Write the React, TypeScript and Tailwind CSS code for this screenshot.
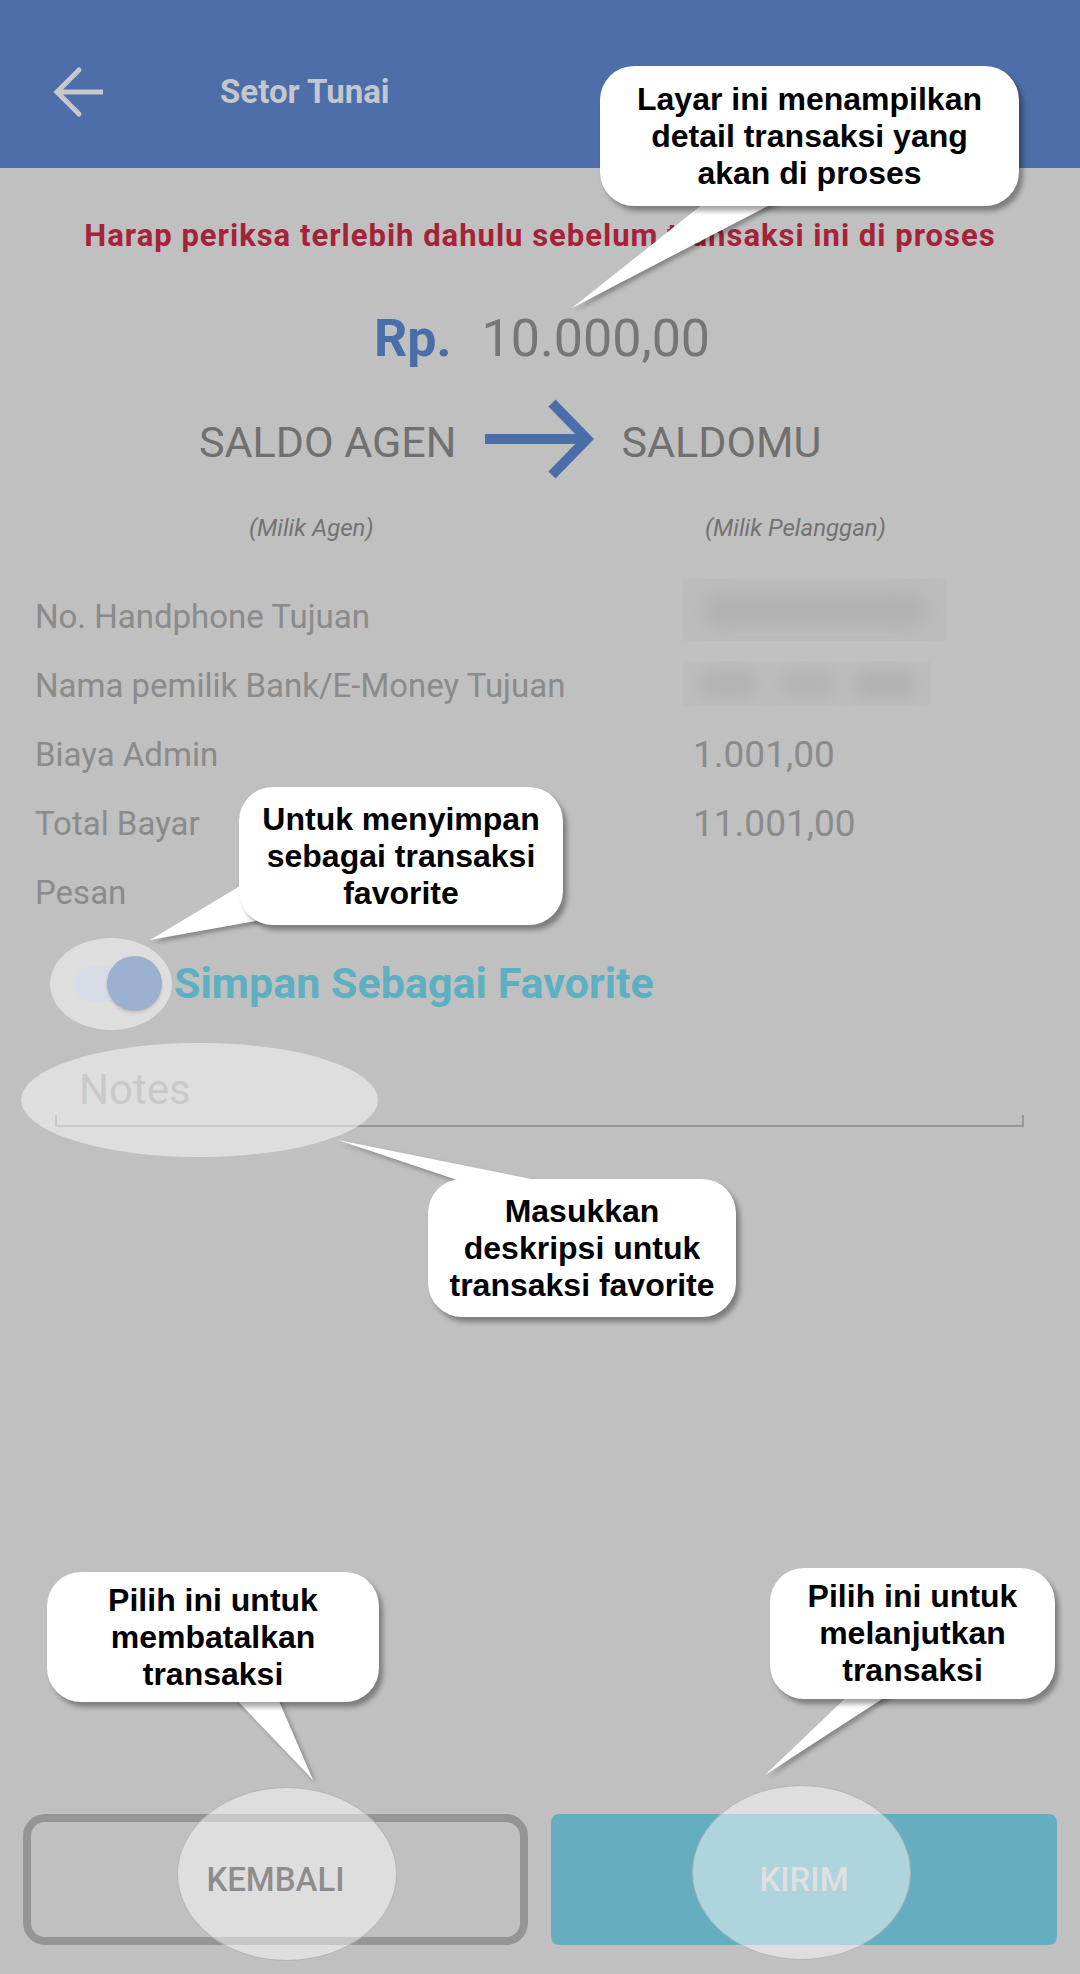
import React from 'react';

type Row = { label: string; value?: string; blur?: 'phone' | 'name' };

const rows: Row[] = [
  { label: 'No. Handphone Tujuan', blur: 'phone' },
  { label: 'Nama pemilik Bank/E-Money Tujuan', blur: 'name' },
  { label: 'Biaya Admin', value: '1.001,00' },
  { label: 'Total Bayar', value: '11.001,00' },
  { label: 'Pesan' },
];

type Tip = { left: number; top: number; w: number; h: number; lines: string[] };

const tips: Tip[] = [
  { left: 600, top: 66, w: 419, h: 140, lines: ['Layar ini menampilkan', 'detail transaksi yang', 'akan di proses'] },
  { left: 239, top: 787, w: 324, h: 138, lines: ['Untuk menyimpan', 'sebagai transaksi', 'favorite'] },
  { left: 428, top: 1179, w: 308, h: 138, lines: ['Masukkan', 'deskripsi untuk', 'transaksi favorite'] },
  { left: 47, top: 1572, w: 332, h: 130, lines: ['Pilih ini untuk', 'membatalkan', 'transaksi'] },
  { left: 770, top: 1568, w: 285, h: 131, lines: ['Pilih ini untuk', 'melanjutkan', 'transaksi'] },
];

function Blurred({ kind }: { kind: 'phone' | 'name' }) {
  if (kind === 'phone') {
    return (
      <div className="ml-[-10px] mt-[-3px] h-[62px] w-[264px] overflow-hidden bg-[#bcbcbc]">
        <div className="mx-[20px] mt-[14px] h-[34px] rounded-full bg-[#b2b2b2] blur-[8px]" />
      </div>
    );
  }
  return (
    <div className="ml-[-10px] mt-[10px] h-[45px] w-[247px] overflow-hidden bg-[#bdbdbd]">
      <div className="mx-[16px] mt-[10px] flex h-[26px] gap-[18px]">
        <div className="flex-1 rounded-full bg-[#b3b3b3] blur-[7px]" />
        <div className="flex-1 rounded-full bg-[#b5b5b5] blur-[7px]" />
        <div className="flex-1 rounded-full bg-[#b2b2b2] blur-[7px]" />
      </div>
    </div>
  );
}

export default function App() {
  return (
    <div className="relative h-[1974px] w-[1080px] overflow-hidden bg-[#c0c0c0] font-['Roboto',sans-serif]">
      <div className="flex h-full flex-col">
        {/* App bar */}
        <header className="flex h-[168px] shrink-0 items-center bg-[#4d6ea8] pt-[16px]">
          <svg className="ml-[52px] h-[52px] w-[52px]" viewBox="0 0 52 52" fill="none" stroke="#c6c8cc" strokeWidth={5}>
            <path d="M51 26H6" />
            <path d="M27 4L5 26l22 22" strokeLinecap="round" />
          </svg>
          <h1 className="ml-[116px] text-[33px] font-bold leading-[40px] text-[#c4c7ce]">Setor Tunai</h1>
        </header>

        <p className="mt-[51px] text-center text-[31px] font-bold leading-[34px] tracking-[1px] text-[#a3233b]">
          Harap periksa terlebih dahulu sebelum transaksi ini di proses
        </p>

        <div className="mt-[56px] flex items-baseline justify-center gap-[30px] pl-[4px] leading-[60px]">
          <span className="text-[52px] font-bold text-[#4a6ea9]">Rp.</span>
          <span className="text-[52px] text-[#767676]">10.000,00</span>
        </div>

        {/* source -> destination */}
        <div className="mt-[30px] flex h-[80px] items-center pl-[199px] text-[43px] leading-[50px] text-[#707070]">
          <span className="mt-[6px]">SALDO AGEN</span>
          <svg className="ml-[29px] h-[80px] w-[110px]" viewBox="0 0 110 80" fill="none" stroke="#4a6ea9" strokeWidth={10}>
            <path d="M0 40H98" />
            <path d="M67 4l35 36-35 36" />
          </svg>
          <span className="ml-[26px] mt-[6px]">SALDOMU</span>
        </div>

        <div className="mt-[35px] flex pl-[249px] text-[24px] italic leading-[28px] text-[#737373]">
          <span className="w-[456px]">(Milik Agen)</span>
          <span>(Milik Pelanggan)</span>
        </div>

        {/* details */}
        <div className="mt-[40px]">
          {rows.map((r) => (
            <div key={r.label} className="flex h-[69px] items-start pl-[35px]">
              <span className="w-[658px] shrink-0 text-[33px] leading-[69px] text-[#8b8b8b]">{r.label}</span>
              {r.blur && <Blurred kind={r.blur} />}
              {r.value && <span className="text-[37px] leading-[69px] text-[#8b8b8b]">{r.value}</span>}
            </div>
          ))}
        </div>

        {/* favourite switch */}
        <div className="mt-[10px] flex h-[92px] items-center pl-[75px]">
          <div className="relative h-[55px] w-[88px]">
            <div className="absolute left-0 top-[10px] h-[36px] w-[66px] rounded-full bg-[#b5bcd0]" />
            <div className="absolute left-[32px] top-0 h-[55px] w-[55px] rounded-full bg-[#4168a5] shadow-[0_2px_3px_rgba(0,0,0,0.3)]" />
          </div>
          <span className="ml-[11px] text-[43px] font-bold leading-[50px] text-[#5db0c2]">Simpan Sebagai Favorite</span>
        </div>

        {/* notes input */}
        <div className="ml-[55px] mr-[56px] mt-[36px]">
          <div className="pl-[24px] text-[42px] leading-[50px] text-[#979797]">Notes</div>
          <div className="h-[12px] border-x-2 border-b-2 border-[#989898]" />
        </div>

        {/* actions */}
        <div className="mt-auto mb-[29px] flex h-[131px] gap-[23px] pl-[23px]">
          <button className="flex w-[505px] items-center justify-center rounded-[22px] border-[8px] border-[#959595] text-[33px] font-medium text-[#262626]">
            KEMBALI
          </button>
          <button className="flex w-[506px] items-center justify-center rounded-[8px] bg-[#64aec0] text-[33px] font-medium text-[#c4c4c4]">
            KIRIM
          </button>
        </div>
      </div>

      {/* spotlight highlights */}
      <div className="absolute left-[50px] top-[938px] h-[92px] w-[122px] rounded-[50%] bg-white/[0.48]" />
      <div className="absolute left-[21px] top-[1043px] h-[114px] w-[357px] rounded-[50%] bg-white/[0.48]" />
      <div className="absolute left-[177px] top-[1787px] h-[174px] w-[220px] rounded-[50%] border border-[#9a9a9a]/60 bg-white/[0.48]" />
      <div className="absolute left-[692px] top-[1785px] h-[175px] w-[219px] rounded-[50%] border border-[#9a9a9a]/60 bg-white/[0.48]" />

      {/* callout tails */}
      <svg
        className="pointer-events-none absolute left-0 top-0 h-[1974px] w-[1080px] drop-shadow-[3px_3px_2px_rgba(0,0,0,0.3)]"
        viewBox="0 0 1080 1974"
        fill="#ffffff"
      >
        <polygon points="713,196 787,196 572,308" />
        <polygon points="250,880 272,918 150,940" />
        <polygon points="475,1186 566,1186 338,1140" />
        <polygon points="231,1694 276,1694 313,1780" />
        <polygon points="854,1690 896,1690 765,1775" />
      </svg>

      {/* callout bubbles */}
      {tips.map((t) => (
        <div
          key={t.lines[0] + t.top}
          className="absolute flex flex-col items-center justify-center rounded-[34px] bg-white text-center font-['Liberation_Sans',Arial,sans-serif] text-[32px] font-bold leading-[37px] text-black shadow-[4px_5px_5px_rgba(0,0,0,0.35)]"
          style={{ left: t.left, top: t.top, width: t.w, height: t.h }}
        >
          {t.lines.map((l) => (
            <span key={l} className="whitespace-nowrap">
              {l}
            </span>
          ))}
        </div>
      ))}
    </div>
  );
}
